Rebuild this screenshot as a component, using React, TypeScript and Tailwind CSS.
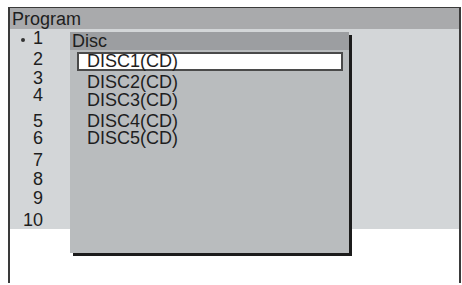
const numbers = [
  { n: "1", cls: "mt-[1px]", dot: true },
  { n: "2", cls: "mt-[4px]" },
  { n: "3", cls: "mt-[2px]" },
  { n: "4", cls: "mt-0" },
  { n: "5", cls: "mt-[9px]" },
  { n: "6", cls: "mt-0" },
  { n: "7", cls: "mt-[5px]" },
  { n: "8", cls: "mt-[2px]" },
  { n: "9", cls: "mt-[2px]" },
  { n: "10", cls: "mt-[5px]" },
];

const discs = [
  { label: "DISC2(CD)", cls: "mt-[3px]" },
  { label: "DISC3(CD)", cls: "mt-[1px]" },
  { label: "DISC4(CD)", cls: "mt-[4px]" },
  { label: "DISC5(CD)", cls: "mt-0" },
];

export default function App() {
  return (
    <div
      className="w-[462px] h-[285px] bg-white pt-[7px] pl-[8px] pr-[1px] overflow-hidden text-[#1e1e1e]"
      style={{ fontFamily: '"Liberation Sans", Arial, sans-serif' }}
    >
      <div className="h-[276px] border-l-2 border-t border-r-2 border-[#3a3a3a]">
        {/* header */}
        <div className="h-[21px] bg-[#a9aaac] pl-[2px] text-[18px] leading-[22px]">
          Program
        </div>

        {/* list area */}
        <div className="h-[200px] bg-[#d3d6d8] flex">
          <div className="w-[60px] flex flex-col">
            {numbers.map((row) => (
              <div
                key={row.n}
                className={`${row.cls} w-[33px] flex items-center justify-end text-[18px] leading-[17px]`}
              >
                {row.dot && (
                  <span className="mr-[8px] mt-[2px] w-[4px] h-[4px] rounded-full bg-[#333]" />
                )}
                {row.n}
              </div>
            ))}
          </div>

          {/* disc popup */}
          <div className="mt-[3px] w-[279px] h-[221px] bg-[#b9bcbe] shadow-[3px_3px_0_#1c1c1c] flex flex-col">
            <div className="h-[18px] bg-[#9c9ea1] pl-[2px] text-[18px] leading-[18px]">
              Disc
            </div>
            <div className="mt-[2px] ml-[7px] mr-[6px] h-[19px] bg-white border-2 border-[#4a4a4a] pl-[8px] text-[18px] leading-[15px]">
              DISC1(CD)
            </div>
            {discs.map((d) => (
              <div
                key={d.label}
                className={`${d.cls} pl-[17px] text-[18px] leading-[17px]`}
              >
                {d.label}
              </div>
            ))}
          </div>
        </div>
      </div>
    </div>
  );
}
